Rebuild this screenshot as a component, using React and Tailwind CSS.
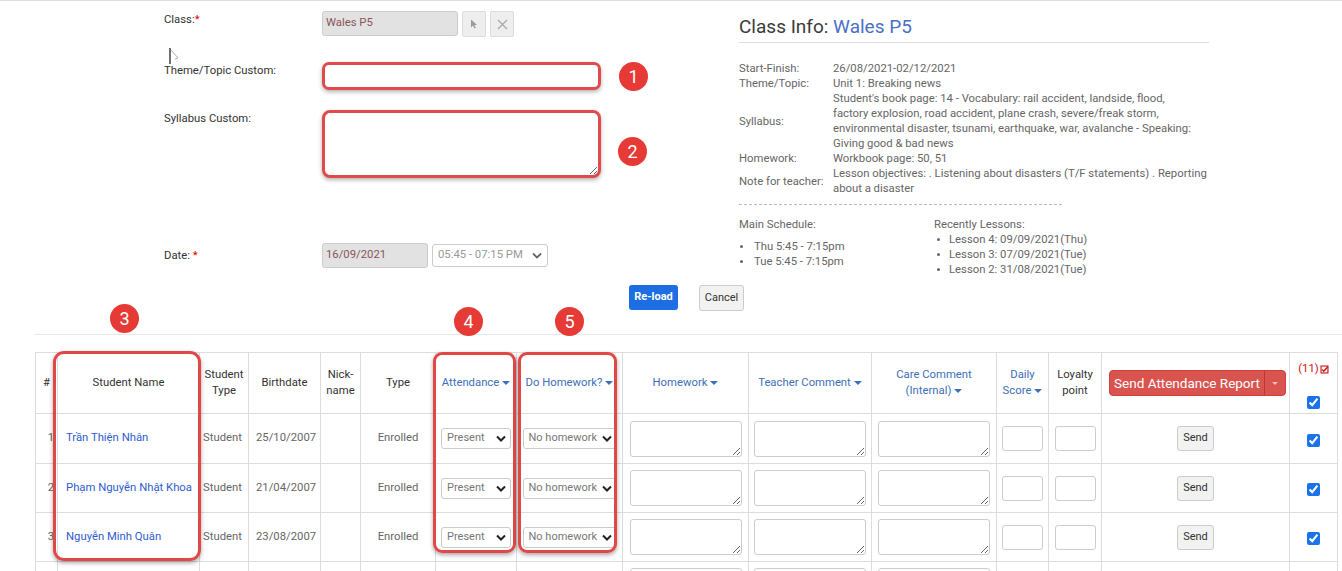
import React from "react";

const Caret = () => (
  <span className="inline-block w-0 h-0 ml-[3px] align-middle border-x-[4px] border-x-transparent border-t-[4px] border-t-current" />
);

const Badge = ({ n, className = "" }) => (
  <div
    className={`flex items-center justify-center w-[29px] h-[29px] rounded-full bg-[#e53a35] text-white text-[18px] leading-none ${className}`}
  >
    {n}
  </div>
);

const Chevron = () => (
  <svg className="w-[10px] h-[7px] shrink-0" viewBox="0 0 10 7">
    <path d="M1 1.5 L5 5.5 L9 1.5" stroke="#222" strokeWidth="2" fill="none" />
  </svg>
);

const FakeSelect = ({ value, wide }) => (
  <div
    className={`${wide ? "w-[94px]" : "w-[70px]"} h-[21px] mx-auto border border-[#ccc] rounded-[3px] bg-white flex items-center justify-between pl-[5px] pr-[4px] text-[11px] text-[#777]`}
  >
    <span className="whitespace-nowrap">{value}</span>
    <Chevron />
  </div>
);

const TA = () => (
  <textarea
    readOnly
    className="block w-[112px] h-[36px] mx-auto border border-[#ccc] rounded-[3px] bg-white resize"
  />
);

const SmallInput = () => (
  <div className="w-[41px] h-[25px] mx-auto border border-[#ccc] rounded-[3px] bg-white" />
);

const Check = () => (
  <input
    type="checkbox"
    defaultChecked
    readOnly
    className="block mx-auto w-[13px] h-[13px] accent-[#1a73e8]"
  />
);

const students = [
  { n: 1, name: "Trần Thiện Nhân", dob: "25/10/2007", h: "h-[50px]" },
  { n: 2, name: "Phạm Nguyễn Nhật Khoa", dob: "21/04/2007", h: "h-[49px]" },
  { n: 3, name: "Nguyễn Minh Quân", dob: "23/08/2007", h: "h-[49px]" },
];

const th = "border border-[#ddd] font-normal text-[11.3px] leading-[16px] text-center align-middle px-[2px]";
const tdb = "border border-[#ddd] text-[11.3px] align-middle";
const td = `${tdb} text-[#666]`;

export default function App() {
  return (
    <div className="relative w-[1342px] h-[571px] overflow-hidden bg-white border-t border-[#ddd] font-[Roboto,Arial,sans-serif] text-[11.3px] text-[#333]">
      {/* mouse cursor artifact */}
      <svg className="absolute left-[168px] top-[46px] w-[12px] h-[20px]" viewBox="0 0 12 20">
        <path d="M2 1 V17" stroke="#111" strokeWidth="1.2" />
        <path d="M3 3 L10 11 L7 12" stroke="#999" strokeWidth="0.8" fill="none" />
      </svg>

      {/* top section */}
      <div className="flex">
        {/* left form */}
        <div className="w-[739px] shrink-0 pl-[164px] pt-[10px]">
          <div className="flex h-[26px]">
            <div className="w-[158px] pt-[1px] leading-[15px]">
              Class:<span className="text-[#d00]">*</span>
            </div>
            <div className="w-[136px] h-[25px] bg-[#e2e2e2] border border-[#ccc] rounded-[3px] flex items-center px-[3px] text-[#8a5555]">
              Wales P5
            </div>
            <div className="ml-[4px] w-[24px] h-[26px] bg-[#eee] border border-[#ddd] rounded-[2px] flex items-center justify-center">
              <svg className="w-[8px] h-[10px]" viewBox="0 0 8 10">
                <path d="M1 0.5 L1 8.5 L3 6.5 L4.5 9.5 L5.8 8.8 L4.4 6 L7 6 Z" fill="#9a9a9a" />
              </svg>
            </div>
            <div className="ml-[4px] w-[24px] h-[26px] bg-[#eee] border border-[#ddd] rounded-[2px] flex items-center justify-center">
              <svg className="w-[11px] h-[11px]" viewBox="0 0 11 11">
                <path d="M1 1 L10 10 M10 1 L1 10" stroke="#a8a8a8" strokeWidth="1.3" />
              </svg>
            </div>
          </div>

          <div className="flex mt-[25px] items-start">
            <div className="w-[158px] pt-[1px] leading-[15px]">Theme/Topic Custom:</div>
            <input
              readOnly
              className="block w-[279px] h-[28px] border-[3px] border-[#e04a4a] rounded-[7px] bg-white shadow-[0_2px_4px_rgba(0,0,0,0.3)] outline-none"
            />
            <Badge n="1" className="ml-[18px] mt-[0px]" />
          </div>

          <div className="flex mt-[19px] items-start">
            <div className="w-[158px] pt-[1px] leading-[15px]">Syllabus Custom:</div>
            <textarea
              readOnly
              className="block w-[279px] h-[68px] border-[3px] border-[#e04a4a] rounded-[8px] bg-white shadow-[0_2px_4px_rgba(0,0,0,0.3)] outline-none resize"
            />
            <Badge n="2" className="ml-[17px] mt-[27px]" />
          </div>

          <div className="flex mt-[65px] items-center">
            <div className="w-[158px] leading-[15px]">
              Date: <span className="text-[#d00]">*</span>
            </div>
            <div className="w-[106px] h-[25px] bg-[#e2e2e2] border border-[#ccc] rounded-[3px] flex items-center px-[3px] text-[#8a5555]">
              16/09/2021
            </div>
            <div className="ml-[4px] w-[116px] h-[23px] border border-[#ccc] rounded-[3px] bg-white flex items-center justify-between pl-[5px] pr-[5px] text-[#999]">
              <span className="whitespace-nowrap">05:45 - 07:15 PM</span>
              <svg className="w-[10px] h-[7px] shrink-0" viewBox="0 0 10 7">
                <path d="M1 1.5 L5 5.5 L9 1.5" stroke="#666" strokeWidth="1.8" fill="none" />
              </svg>
            </div>
          </div>
        </div>

        {/* right info */}
        <div className="w-[470px] pt-[12px] leading-[15px] text-[#666]">
          <div className="text-[19px] leading-[28px] text-[#3a3a3a] pb-[1px] border-b border-[#ddd]">
            Class Info: <span className="text-[#4a6fc7]">Wales P5</span>
          </div>
          <div className="mt-[18px] grid grid-cols-[94px_1fr]">
            <div>Start-Finish:</div>
            <div>26/08/2021-02/12/2021</div>
            <div>Theme/Topic:</div>
            <div>Unit 1: Breaking news</div>
            <div className="self-center">Syllabus:</div>
            <div className="whitespace-nowrap">
              <div>Student's book page: 14 - Vocabulary: rail accident, landside, flood,</div>
              <div>factory explosion, road accident, plane crash, severe/freak storm,</div>
              <div>environmental disaster, tsunami, earthquake, war, avalanche - Speaking:</div>
              <div>Giving good &amp; bad news</div>
            </div>
            <div>Homework:</div>
            <div>Workbook page: 50, 51</div>
            <div className="self-center">Note for teacher:</div>
            <div className="whitespace-nowrap">
              <div>Lesson objectives: . Listening about disasters (T/F statements) . Reporting</div>
              <div>about a disaster</div>
            </div>
          </div>
          <div className="mt-[8px] w-[323px] border-t border-dashed border-[#bbb]" />
          <div className="flex mt-[12px]">
            <div className="w-[195px]">
              <div>Main Schedule:</div>
              <div className="mt-[7px]">
                {["Thu 5:45 - 7:15pm", "Tue 5:45 - 7:15pm"].map((t) => (
                  <div key={t} className="flex items-center">
                    <span className="ml-[1px] w-[3px] h-[3px] rounded-full bg-[#666]" />
                    <span className="ml-[11px]">{t}</span>
                  </div>
                ))}
              </div>
            </div>
            <div>
              <div>Recently Lessons:</div>
              {["Lesson 4: 09/09/2021(Thu)", "Lesson 3: 07/09/2021(Tue)", "Lesson 2: 31/08/2021(Tue)"].map((t) => (
                <div key={t} className="flex items-center">
                  <span className="ml-[3px] w-[3px] h-[3px] rounded-full bg-[#666]" />
                  <span className="ml-[9px]">{t}</span>
                </div>
              ))}
            </div>
          </div>
        </div>
      </div>

      {/* buttons */}
      <div className="flex pl-[629px] gap-[21px] mt-[8px]">
        <div className="w-[49px] h-[25px] bg-[#1c6ee2] rounded-[3px] text-white text-[11px] font-bold flex items-center justify-center">
          Re-load
        </div>
        <div className="w-[45px] h-[26px] bg-[#f2f2f2] border border-[#ccc] rounded-[3px] text-[11px] flex items-center justify-center">
          Cancel
        </div>
      </div>

      <div className="ml-[35px] mt-[23px] border-t border-[#e6e6e6]" />

      {/* table */}
      <div className="relative ml-[35px] mt-[17px]">
        <table className="table-fixed border-collapse w-[1302px]">
          <colgroup>
            <col className="w-[22px]" />
            <col className="w-[142px]" />
            <col className="w-[49px]" />
            <col className="w-[72px]" />
            <col className="w-[40px]" />
            <col className="w-[75px]" />
            <col className="w-[81px]" />
            <col className="w-[106px]" />
            <col className="w-[126px]" />
            <col className="w-[123px]" />
            <col className="w-[125px]" />
            <col className="w-[52px]" />
            <col className="w-[53px]" />
            <col className="w-[188px]" />
            <col className="w-[48px]" />
          </colgroup>
          <thead>
            <tr className="h-[61px]">
              <th className={th}>#</th>
              <th className={th}>Student Name</th>
              <th className={th}>Student Type</th>
              <th className={th}>Birthdate</th>
              <th className={th}>Nick-name</th>
              <th className={th}>Type</th>
              <th className={`${th} text-[#3d6fb8]`}>Attendance<Caret /></th>
              <th className={`${th} text-[#3d6fb8] whitespace-nowrap`}>Do Homework?<Caret /></th>
              <th className={`${th} text-[#3d6fb8]`}>Homework<Caret /></th>
              <th className={`${th} text-[#3d6fb8]`}>Teacher Comment<Caret /></th>
              <th className={`${th} text-[#3d6fb8]`}>
                Care Comment
                <br />
                (Internal)<Caret />
              </th>
              <th className={`${th} text-[#3d6fb8]`}>
                Daily
                <br />
                Score<Caret />
              </th>
              <th className={th}>
                Loyalty
                <br />
                point
              </th>
              <th className={th}>
                <div className="ml-[5px] w-[177px] h-[26px] flex rounded-[4px] bg-[#d9534f] border border-[#d43f3a] text-white text-[13.5px]">
                  <div className="flex-1 flex items-center justify-center border-r border-[#b83a36] whitespace-nowrap">
                    Send Attendance Report
                  </div>
                  <div className="w-[20px] flex items-center justify-center">
                    <span className="inline-block w-0 h-0 border-x-[3px] border-x-transparent border-t-[3px] border-t-[#f3c0be]" />
                  </div>
                </div>
              </th>
              <th className={`${th} align-top`}>
                <div className="flex flex-col items-center pt-[9px]">
                  <div className="flex items-center text-[#cc1111] leading-[14px]">
                    (11)
                    <svg className="w-[9px] h-[9px] ml-[1px]" viewBox="0 0 9 9">
                      <rect x="0.5" y="0.5" width="8" height="8" fill="#cc1111" />
                      <rect x="1.6" y="1.6" width="5.8" height="5.8" fill="#fff" />
                      <path d="M2.2 4.6 L3.8 6.2 L7.8 1.8" stroke="#cc1111" strokeWidth="1.4" fill="none" />
                    </svg>
                  </div>
                  <div className="mt-[20px]">
                    <Check />
                  </div>
                </div>
              </th>
            </tr>
          </thead>
          <tbody>
            {students.map((s) => (
              <tr key={s.n} className={s.h}>
                <td className={`${td} text-right pr-[3px]`}>{s.n}</td>
                <td className={`${tdb} pl-[8px] text-[#2f5cd0] whitespace-nowrap`}>{s.name}</td>
                <td className={`${td} pl-[3px]`}>Student</td>
                <td className={`${td} pl-[7px]`}>{s.dob}</td>
                <td className={td}></td>
                <td className={`${td} text-center`}>Enrolled</td>
                <td className={td}>
                  <FakeSelect value="Present" />
                </td>
                <td className={td}>
                  <FakeSelect value="No homework" wide />
                </td>
                <td className={td}>
                  <TA />
                </td>
                <td className={td}>
                  <TA />
                </td>
                <td className={td}>
                  <TA />
                </td>
                <td className={td}>
                  <SmallInput />
                </td>
                <td className={td}>
                  <SmallInput />
                </td>
                <td className={td}>
                  <div className="w-[37px] h-[25px] mx-auto bg-[#f2f2f2] border border-[#ccc] rounded-[3px] flex items-center justify-center text-[11px] text-[#333]">
                    Send
                  </div>
                </td>
                <td className={td}>
                  <div className="pt-[3px]">
                    <Check />
                  </div>
                </td>
              </tr>
            ))}
            <tr className="h-[49px]">
              <td className={td}></td>
              <td className={td}></td>
              <td className={td}></td>
              <td className={td}></td>
              <td className={td}></td>
              <td className={td}></td>
              <td className={td}></td>
              <td className={td}></td>
              <td className={td}>
                <TA />
              </td>
              <td className={td}>
                <TA />
              </td>
              <td className={td}>
                <TA />
              </td>
              <td className={td}></td>
              <td className={td}></td>
              <td className={td}></td>
              <td className={td}></td>
            </tr>
          </tbody>
        </table>

        {/* annotation overlays */}
        <div className="absolute left-[18px] top-[-1px] w-[148px] h-[210px] border-[3px] border-[#e04848] rounded-[11px] shadow-[0_2px_4px_rgba(0,0,0,0.35)]" />
        <div className="absolute left-[398px] top-[0px] w-[83px] h-[201px] border-[3px] border-[#e04848] rounded-[9px] shadow-[0_2px_4px_rgba(0,0,0,0.35)]" />
        <div className="absolute left-[483px] top-[0px] w-[99px] h-[201px] border-[3px] border-[#e04848] rounded-[9px] shadow-[0_2px_4px_rgba(0,0,0,0.35)]" />
        <Badge n="3" className="absolute left-[75px] top-[-48px]" />
        <Badge n="4" className="absolute left-[419px] top-[-45px]" />
        <Badge n="5" className="absolute left-[520px] top-[-45px]" />
      </div>
    </div>
  );
}
